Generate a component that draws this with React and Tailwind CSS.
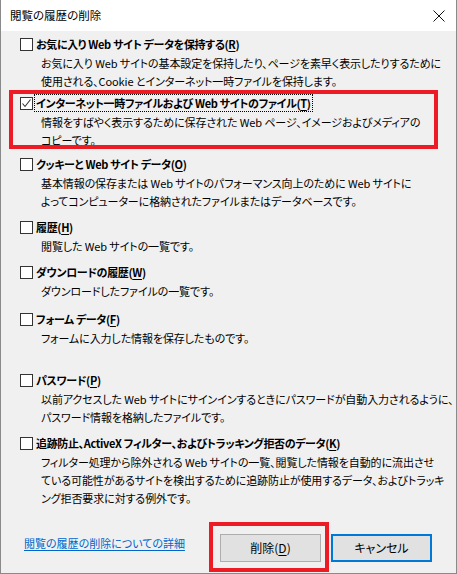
import React from 'react';

const items = [
  {
    label: 'お気に入り Web サイト データを保持する',
    key: 'R',
    desc: ['お気に入り Web サイトの基本設定を保持したり、ページを素早く表示したりするために', '使用される、Cookie とインターネット一時ファイルを保持します。'],
    mt: 'mt-[4px]',
  },
  {
    label: 'インターネット一時ファイルおよび Web サイトのファイル',
    key: 'T',
    desc: ['情報をすばやく表示するために保存された Web ページ、イメージおよびメディアの', 'コピーです。'],
    mt: 'mt-[4px]',
    checked: true,
  },
  {
    label: 'クッキーと Web サイト データ',
    key: 'O',
    desc: ['基本情報の保存または Web サイトのパフォーマンス向上のために Web サイトに', 'よってコンピューターに格納されたファイルまたはデータベースです。'],
    mt: 'mt-[6px]',
  },
  { label: '履歴', key: 'H', desc: ['閲覧した Web サイトの一覧です。'], mt: 'mt-[8px]' },
  { label: 'ダウンロードの履歴', key: 'W', desc: ['ダウンロードしたファイルの一覧です。'], mt: 'mt-[8px]' },
  { label: 'フォーム データ', key: 'F', desc: ['フォームに入力した情報を保存したものです。'], mt: 'mt-[10px]' },
  {
    label: 'パスワード',
    key: 'P',
    desc: ['以前アクセスした Web サイトにサインインするときにパスワードが自動入力されるように、', 'パスワード情報を格納したファイルです。'],
    mt: 'mt-[24px]',
  },
  {
    label: '追跡防止、ActiveX フィルター、およびトラッキング拒否のデータ',
    key: 'K',
    desc: [
      'フィルター処理から除外される Web サイトの一覧、閲覧した情報を自動的に流出させ',
      'ている可能性があるサイトを検出するために追跡防止が使用するデータ、およびトラッキ',
      'ング拒否要求に対する例外です。',
    ],
    mt: 'mt-[8px]',
  },
];

function Checkbox({ checked }) {
  return (
    <span className="w-[13px] h-[13px] border border-[#333333] bg-white flex items-center justify-center shrink-0">
      {checked && (
        <svg width="11" height="11" viewBox="0 0 11 11">
          <path d="M1.5 5.5 L4 8.5 L9.5 1.5" fill="none" stroke="#333333" strokeWidth="1.1" />
        </svg>
      )}
    </span>
  );
}

function Item({ item }) {
  return (
    <div className={item.mt}>
      <div className="h-[18px] flex items-center pl-[19px]">
        <Checkbox checked={item.checked} />
        <span
          className={
            'ml-[2px] px-[1px] leading-[16px] font-semibold tracking-[-0.35px] whitespace-nowrap ' +
            (item.checked ? 'outline outline-1 outline-dotted outline-black' : '')
          }
        >
          {item.label}(<span className="underline underline-offset-2">{item.key}</span>)
        </span>
      </div>
      <div className="mt-[1px] pl-[40px] leading-[18px] tracking-[-0.1px]">
        {item.desc.map((line) => (
          <div key={line} className="whitespace-nowrap">{line}</div>
        ))}
      </div>
    </div>
  );
}

export default function App() {
  return (
    <div
      className="relative w-[457px] h-[574px] bg-[#f0f0f0] text-[11px] text-black [font-feature-settings:'palt'] border-x border-b border-[#8a8a8a] overflow-hidden"
      style={{ fontFamily: '"Noto Sans CJK JP", "Noto Sans", sans-serif' }}
    >
      {/* title bar */}
      <div className="h-[31px] bg-white flex items-center justify-between pl-[9px] pr-[11px]">
        <span className="text-[11.5px]">閲覧の履歴の削除</span>
        <svg width="12" height="12" viewBox="0 0 12 12">
          <path d="M0.5 0.5 L11.5 11.5 M11.5 0.5 L0.5 11.5" stroke="#111111" strokeWidth="1" />
        </svg>
      </div>

      <div className="flex flex-col">
        {items.map((item) => (
          <Item key={item.key} item={item} />
        ))}
      </div>

      {/* footer */}
      <div className="flex items-start mt-[27px] pl-[23px]">
        <a className="mt-[1px] text-[#0066cc] underline underline-offset-2 whitespace-nowrap">閲覧の履歴の削除についての詳細</a>
        <div className="flex gap-[10px] ml-auto mr-[24px]">
          <button className="w-[101px] h-[28px] bg-[#e1e1e1] border border-[#adadad] text-[12px]">
            削除(<span className="underline underline-offset-2">D</span>)
          </button>
          <button className="w-[101px] h-[28px] bg-[#e1e1e1] border-2 border-[#0078d7] text-[12px]">キャンセル</button>
        </div>
      </div>

      {/* annotation boxes */}
      <div className="absolute left-[8px] top-[90px] w-[429px] h-[59px] border-4 border-[#ed1c24] pointer-events-none" />
      <div className="absolute left-[208px] top-[522px] w-[120px] h-[50px] border-4 border-[#ed1c24] pointer-events-none" />
    </div>
  );
}
